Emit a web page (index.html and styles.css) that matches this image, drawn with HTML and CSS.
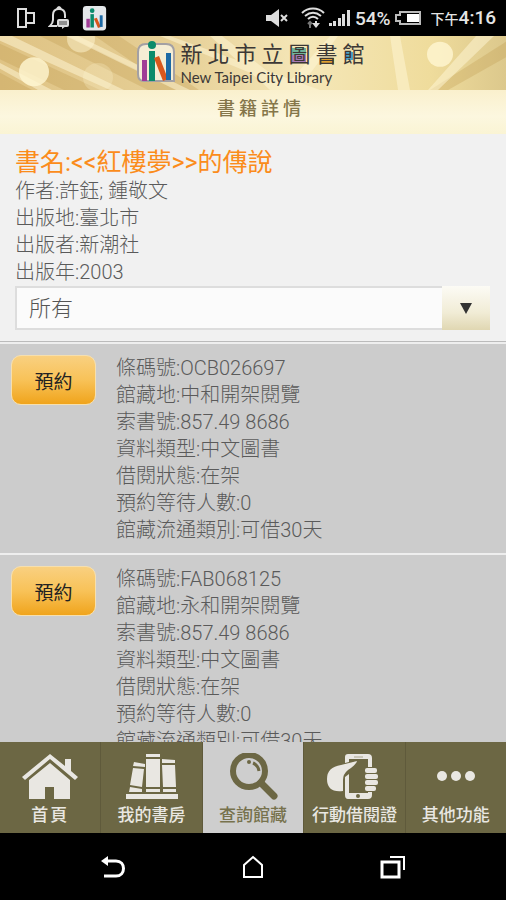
FILE: index.html
```html
<!DOCTYPE html>
<html lang="zh-Hant">

<head>
  <meta charset="utf-8">
  <meta name="viewport" content="width=device-width, initial-scale=1">
  <title>新北市立圖書館</title>
  <link rel="stylesheet" href="styles.css">
</head>

<body>
  <div class="status">
    <div class="status-group">
      <svg width="20" height="22" viewBox="0 0 20 22" fill="none" stroke="#ddd" stroke-width="2">
        <path d="M10 2H2v18h8zM10 6h8v10h-8" />
      </svg>
      <svg width="22" height="24" viewBox="0 0 22 24" fill="none" stroke="#ddd" stroke-width="2">
        <path d="M9 20H2q3-3 3-6V9q0-6 6-6t6 6v3M9 3q2-4 4 0" />
        <rect x="9" y="13" width="12" height="8" rx="2" fill="#ddd" stroke="none" />
        <path d="M14 20v3l4-3" fill="#ddd" stroke="none" />
        <path d="M11 16h8M11 18h8" stroke="#444" stroke-width="1" />
      </svg>
      <svg width="25" height="25" viewBox="0 0 40 43">
        <rect width="40" height="42" rx="6" fill="#e4e7ea" />
        <rect x="6" y="22" width="6" height="15" fill="#a03c96" />
        <rect x="13" y="14" width="6" height="23" fill="#0c8b6b" />
        <circle cx="16" cy="8" r="4" fill="#0c8b6b" />
        <path d="M19 22l5-2 7 16-5 2z" fill="#d9571c" />
        <rect x="29" y="16" width="5" height="20" fill="#1d69a5" />
      </svg>
    </div>
    <div class="status-group">
      <svg width="24" height="20" viewBox="0 0 24 20" fill="#ddd">
        <path d="M1 7h5l8-6v18l-8-6H1z" />
        <path d="M16 7l6 6M22 7l-6 6" stroke="#ddd" stroke-width="2" />
      </svg>
      <svg class="status-wifi" width="24" height="22" viewBox="0 0 24 22" fill="none" stroke="#ddd" stroke-width="2">
        <path d="M1 6c6-6 16-6 22 0M4 9c5-4 11-4 16 0M7 12c3-3 7-3 10 0" />
        <path d="M9 21v-6M7 17l2-2 2 2" stroke="#777" />
        <path d="M15 14v3" />
        <path d="M11 16h8l-4 5z" fill="#ddd" stroke="none" />
      </svg>
      <svg width="22" height="18" viewBox="0 0 22 18" fill="#ddd">
        <path d="M0 14h3v3H0zM4 12h3v5H4zM9 9h3v8H9zM13 5h3v12h-3zM18 1h3v16h-3z" />
      </svg>
      <span class="status-percent">54%</span>
      <svg width="26" height="16" viewBox="0 0 26 16">
        <path d="M5 2h20v12H5v-3H1V5h4z" fill="none" stroke="#bbb" stroke-width="2" />
        <rect x="12" y="4" width="12" height="8" fill="#fff" />
      </svg>
      <span class="status-time"><small>下午</small>4:16</span>
    </div>
  </div>

  <header class="banner">
    <svg class="banner-rays" viewBox="0 0 506 56" preserveAspectRatio="none">
      <g fill="#b98f3e" opacity=".25">
        <path d="M0 8L100 56H64L0 24zM40 0h28l110 56h-30zM0 38l32 18H0zM95 0h24l80 56h-26zM506 6v16l-58 34h-18z" />
      </g>
      <g fill="#fff8d8" opacity=".5">
        <path d="M0 0h12l112 56h-14L0 5zM66 0h12l112 56h-14zM160 0h10l150 56h-28zM0 28l52 28H38L0 34zM210 0h12l70 56h-22zM330 0h8l-40 56h-16zM390 0h10l10 56h-12zM476 0h18l-56 56h-10z" />
      </g>
      <g fill="#fff6d2">
        <circle cx="34" cy="37" r="15" opacity=".8" />
        <circle cx="81" cy="3" r="14" opacity=".5" />
        <circle cx="98" cy="43" r="15" opacity=".25" />
        <circle cx="440" cy="19" r="13" opacity=".8" />
      </g>
    </svg>
    <div class="brand">
      <svg width="40" height="44" viewBox="0 0 40 44">
        <path d="M10 4h20q8 0 8 8v29H8q-6 0-6-7V12q0-8 8-8z" fill="#f5edd5" stroke="#a3a0a4" stroke-width="2" />
        <rect x="6" y="20" width="5" height="21" fill="#a03c96" />
        <rect x="13" y="11" width="6" height="30" fill="#0c8b6b" />
        <circle cx="16" cy="5" r="4" fill="#0c8b6b" />
        <path d="M18 18l5-2 9 23-5 2z" fill="#d9571c" />
        <rect x="30" y="13" width="5" height="27" fill="#1d69a5" />
      </svg>
      <div>
        <div class="brand-name">新北市立<span class="tu">圖</span><span class="shu">書</span><span class="guan">館</span></div>
        <div class="brand-en">New Taipei City Library</div>
      </div>
    </div>
  </header>
  <h1 class="page-title">書籍詳情</h1>

  <section class="book">
    <h2 class="book-name">書名:&lt;&lt;紅樓夢&gt;&gt;的傳說</h2>
    <div>作者:許鈺; 鍾敬文</div>
    <div>出版地:臺北市</div>
    <div>出版者:新潮社</div>
    <div>出版年:2003</div>
    <div class="select-box">
      <select class="branch" aria-label="館藏地">
        <option>所有</option>
      </select>
      <span class="select-arrow"></span>
    </div>
  </section>

  <main class="copies">
    <div class="copy">
      <button class="reserve" type="button">預約</button>
      <div>
        <div>條碼號:OCB026697</div>
        <div>館藏地:中和開架閱覽</div>
        <div>索書號:857.49 8686</div>
        <div>資料類型:中文圖書</div>
        <div>借閱狀態:在架</div>
        <div>預約等待人數:0</div>
        <div>館藏流通類別:可借30天</div>
      </div>
    </div>
    <div class="copy">
      <button class="reserve" type="button">預約</button>
      <div>
        <div>條碼號:FAB068125</div>
        <div>館藏地:永和開架閱覽</div>
        <div>索書號:857.49 8686</div>
        <div>資料類型:中文圖書</div>
        <div>借閱狀態:在架</div>
        <div>預約等待人數:0</div>
        <div>館藏流通類別:可借30天</div>
      </div>
    </div>
  </main>

  <nav class="tabs">
    <a class="tab tab-home" href="#">
      <svg width="58" height="48" viewBox="0 0 58 48" fill="#e9e7e2">
        <path d="M1 24L29 1l15 12V6h6v12l7 6-3 3L29 6 4 27z" />
        <path d="M8 27L29 10l20 17v19H33V34h-9v12H8z" />
      </svg>
      首頁
    </a>
    <a class="tab" href="#">
      <svg width="58" height="48" viewBox="0 0 58 48" fill="#e9e7e2">
        <path d="M3 41h52v5H3zM23 1h14v3H23zM23 6h14v28H23zM23 36h14v3H23zM11 9l11 2v3l-12-1zM10 15l11 1-2 18-12-2zM7 34l12 2v3H6zM39 6l13 1v3H39zM39 12h13l1 22H40zM40 36h13v3H40z" />
      </svg>
      我的書房
    </a>
    <a class="tab active" href="#">
      <svg width="58" height="48" viewBox="0 0 58 48" fill="none" stroke="#6c6744">
        <circle cx="25" cy="18" r="16" stroke-width="6" />
        <path d="M37 30l13 13" stroke-width="7" stroke-linecap="round" />
        <path d="M29 10q5 2 6 8" stroke-width="3" />
        <circle cx="25" cy="9" r="2" fill="#6c6744" stroke="none" />
      </svg>
      查詢館藏
    </a>
    <a class="tab" href="#">
      <svg width="58" height="48" viewBox="0 0 58 48" fill="#e9e7e2">
        <path d="M20 10V4q0-3 3-3h20q4 0 4 4v9h-4V6H24v3zM20 24l4-3v19h19v-1h4v3q0 4-4 4H23q-3 0-3-4z" />
        <path d="M32 8q-1 4-9 9-5 4-5 10v11Q2 40 2 26q0-12 14-14z" />
        <rect x="40" y="15" width="12" height="5" rx="2" />
        <rect x="40" y="21" width="13" height="5" rx="2" />
        <rect x="40" y="27" width="13" height="5" rx="2" />
        <rect x="40" y="33" width="11" height="5" rx="2" />
        <circle cx="33" cy="43" r="2" fill="#6c6744" />
        <path d="M29 4h9" stroke="#aaa68f" />
      </svg>
      行動借閱證
    </a>
    <a class="tab" href="#">
      <svg width="58" height="48" viewBox="0 0 58 48" fill="#e9e7e2">
        <circle cx="15" cy="23" r="5" />
        <circle cx="29" cy="23" r="5" />
        <circle cx="43" cy="23" r="5" />
      </svg>
      其他功能
    </a>
  </nav>

  <div class="system-nav">
    <button type="button" aria-label="返回">
      <svg width="26" height="26" viewBox="0 0 26 26" fill="none" stroke="#fff" stroke-width="3">
        <path d="M7 7h9c10 0 10 15 0 15H4" />
        <path d="M1 7l7-5v10z" fill="#fff" stroke="none" />
      </svg>
    </button>
    <button type="button" aria-label="主畫面">
      <svg width="26" height="26" viewBox="0 0 26 26" fill="none" stroke="#fff" stroke-width="2">
        <path d="M4 11l9-8 9 8v12H4z" />
      </svg>
    </button>
    <button type="button" aria-label="最近使用">
      <svg width="26" height="26" viewBox="0 0 26 26" fill="none" stroke="#fff" stroke-width="3">
        <path d="M2 8h17v15H2z" />
        <path d="M10 3h14v13" stroke-width="2" />
      </svg>
    </button>
  </div>
</body>

</html>
```
FILE: styles.css
```css
* {
  box-sizing: border-box;
}

body {
  margin: 0;
  height: 100vh;
  display: flex;
  flex-direction: column;
  overflow: hidden;
  color: #5a5a5a;
  font-size: 20px;
  font-weight: 300;
  line-height: 27px;
  font-family: Roboto, "Noto Sans CJK TC", sans-serif;
  background-color: #000;
}

svg {
  display: block;
  flex: none;
}

/* status bar */
.status {
  display: flex;
  flex: none;
  align-items: center;
  justify-content: space-between;
  height: 36px;
  padding: 0 10px 0 16px;
  color: #e4e4e4;
  background-color: #000;
}

.status-group {
  display: flex;
  align-items: center;
  gap: 4px;
}

.status-group:first-child {
  gap: 12px;
}

.status-wifi {
  margin-left: 8px;
}

.status-percent,
.status-time {
  font-size: 19px;
  font-weight: 500;
}

.status-time {
  margin-left: 6px;
}

.status-time small {
  font-size: 14px;
}

/* header */
.banner {
  position: relative;
  flex: none;
  height: 54px;
  overflow: hidden;
  background-image: linear-gradient(90deg, #dfc384, #e6cf96 35%, #f5e7b8 60%, #efdc9c 85%, #dcc88c);
}

.banner-rays {
  position: absolute;
  top: 0;
  left: 0;
  width: 100%;
  height: 100%;
}

.brand {
  position: relative;
  display: flex;
  justify-content: center;
  gap: 4px;
  padding-top: 4px;
}

.brand-name {
  height: 30px;
  color: #3c3836;
  font-size: 22px;
  font-weight: 400;
  line-height: 30px;
  letter-spacing: 5px;
}

.brand-name span {
  display: inline-block;
  height: 30px;
  vertical-align: top;
  background-repeat: no-repeat;
}

.tu {
  background-image: linear-gradient(#6fb39a 50%, #a77bb5 50%);
  background-position: 4px 8px;
  background-size: 14px 14px;
}

.shu {
  background-image: linear-gradient(#e0a030, #e0a030);
  background-position: 4px 18px;
  background-size: 14px 6px;
}

.guan {
  background-image: linear-gradient(#4ba3c7, #4ba3c7);
  background-position: 3px 12px;
  background-size: 7px 8px;
}

.brand-en {
  color: #3c3836;
  font-family: Lato, sans-serif;
  font-size: 15px;
  font-weight: 400;
  line-height: 14px;
}

.page-title {
  flex: none;
  margin: 0;
  padding: 6px 0 12px 16px;
  color: #85764a;
  font-size: 18px;
  font-weight: 500;
  line-height: 26px;
  letter-spacing: 4px;
  text-align: center;
  background-image: linear-gradient(#faf0cd, #fcf7df 60%, #faf4d4);
}

/* book */
.book {
  flex: none;
  padding: 13px 16px 11px 15px;
  background-color: #f1f1f1;
  border-bottom: 1px solid #bbb;
}

.book-name {
  margin: 0;
  color: #fb8c1b;
  font-size: 25px;
  font-weight: 400;
  line-height: 31px;
}

.select-box {
  position: relative;
}

.branch {
  display: block;
  width: 100%;
  height: 44px;
  padding: 0 60px 0 12px;
  color: #555;
  font-family: inherit;
  font-size: 22px;
  font-weight: 300;
  background-color: #fbfbfb;
  border: 2px solid #ddd;
  border-radius: 0;
  appearance: none;
}

.select-arrow {
  position: absolute;
  top: 0;
  right: 0;
  display: flex;
  align-items: center;
  justify-content: center;
  width: 48px;
  height: 44px;
  background-image: linear-gradient(#fcfbf5, #f1ecd6 60%, #e0d7b2);
  pointer-events: none;
}

.select-arrow:after {
  content: '';
  border: 6px solid transparent;
  border-top: 11px solid #333;
  border-bottom: none;
}

/* copies */
.copies {
  flex: 1;
  min-height: 0;
  overflow: hidden;
  background-color: #ccc;
}

.copy {
  display: flex;
  align-items: flex-start;
  gap: 20px;
  padding: 11px 12px 9px 11px;
  border-top: 2px solid #eee;
}

.reserve {
  flex: none;
  width: 85px;
  height: 50px;
  padding: 0;
  color: #222;
  font-family: inherit;
  font-size: 19px;
  font-weight: 400;
  background-image: linear-gradient(#f9d080, #f8c258 50%, #f0a41c);
  border: 1px solid #f6dfae;
  border-radius: 10px;
}

/* tabs */
.tabs {
  display: flex;
  flex: none;
  background-color: #6c6744;
}

.tab {
  display: flex;
  flex: 1 1 0;
  flex-direction: column;
  align-items: center;
  height: 91px;
  padding-top: 11px;
  color: #e9e7e2;
  font-size: 17px;
  font-weight: 500;
  line-height: 28px;
  white-space: nowrap;
  text-decoration: none;
  border-right: 1px solid #5f5a3b;
}

.tab-home {
  letter-spacing: 2px;
}

.tab.active {
  color: #77724d;
  background-color: #cecece;
}

.tab:last-child {
  border-right: none;
}

/* system buttons */
.system-nav {
  display: flex;
  flex: none;
  align-items: center;
  justify-content: center;
  gap: 114px;
  height: 67px;
  background-color: #000;
}

.system-nav button {
  padding: 0;
  background: none;
  border: none;
}
```
